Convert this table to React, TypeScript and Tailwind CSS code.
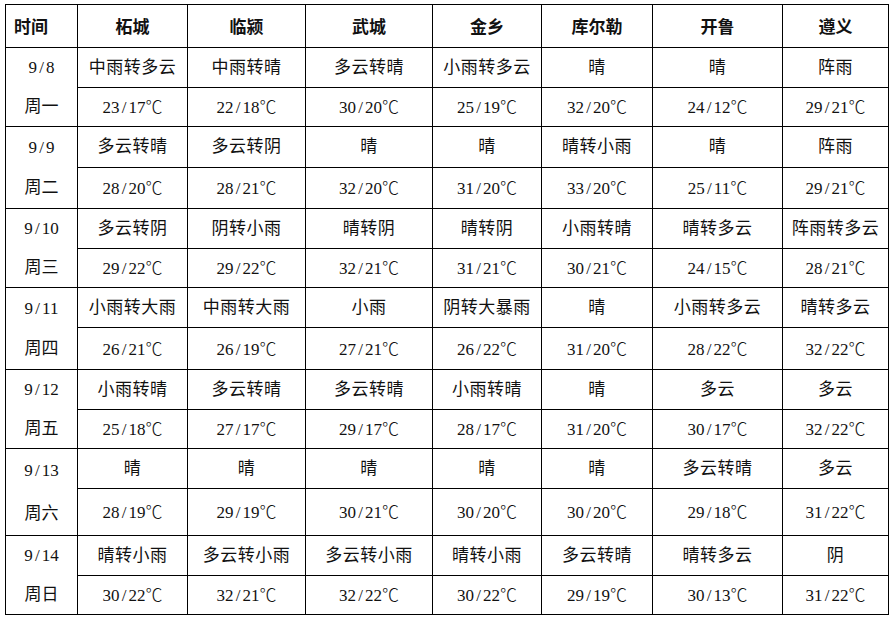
const cities = ["柘城", "临颍", "武城", "金乡", "库尔勒", "开鲁", "遵义"];

const colWidths = [72, 110, 118, 127, 109, 111, 130, 106];

type Day = {
  date: string;
  week: string;
  weather: string[];
  temps: string[];
  h1: number;
  h2: number;
};

const days: Day[] = [
  {
    date: "9/8",
    week: "周一",
    weather: ["中雨转多云", "中雨转晴", "多云转晴", "小雨转多云", "晴", "晴", "阵雨"],
    temps: ["23/17", "22/18", "30/20", "25/19", "32/20", "24/12", "29/21"],
    h1: 40,
    h2: 39,
  },
  {
    date: "9/9",
    week: "周二",
    weather: ["多云转晴", "多云转阴", "晴", "晴", "晴转小雨", "晴", "阵雨"],
    temps: ["28/20", "28/21", "32/20", "31/20", "33/20", "25/11", "29/21"],
    h1: 41,
    h2: 41,
  },
  {
    date: "9/10",
    week: "周三",
    weather: ["多云转阴", "阴转小雨", "晴转阴", "晴转阴", "小雨转晴", "晴转多云", "阵雨转多云"],
    temps: ["29/22", "29/22", "32/21", "31/21", "30/21", "24/15", "28/21"],
    h1: 40,
    h2: 39,
  },
  {
    date: "9/11",
    week: "周四",
    weather: ["小雨转大雨", "中雨转大雨", "小雨", "阴转大暴雨", "晴", "小雨转多云", "晴转多云"],
    temps: ["26/21", "26/19", "27/21", "26/22", "31/20", "28/22", "32/22"],
    h1: 40,
    h2: 42,
  },
  {
    date: "9/12",
    week: "周五",
    weather: ["小雨转晴", "多云转晴", "多云转晴", "小雨转晴", "晴", "多云", "多云"],
    temps: ["25/18", "27/17", "29/17", "28/17", "31/20", "30/17", "32/22"],
    h1: 40,
    h2: 39,
  },
  {
    date: "9/13",
    week: "周六",
    weather: ["晴", "晴", "晴", "晴", "晴", "多云转晴", "多云"],
    temps: ["28/19", "29/19", "30/21", "30/20", "30/20", "29/18", "31/22"],
    h1: 40,
    h2: 47,
  },
  {
    date: "9/14",
    week: "周日",
    weather: ["晴转小雨", "多云转小雨", "多云转小雨", "晴转小雨", "多云转晴", "晴转多云", "阴"],
    temps: ["30/22", "32/21", "32/22", "30/22", "29/19", "30/13", "31/22"],
    h1: 40,
    h2: 39,
  },
];

function Slashed({ value, unit }: { value: string; unit?: string }) {
  const [a, b] = value.split("/");
  return (
    <span>
      {a}
      <span className="inline-block w-[9px] text-center">/</span>
      {b}
      {unit && <span className="font-['Noto_Sans_CJK_SC',sans-serif] font-light">{unit}</span>}
    </span>
  );
}

export default function App() {
  return (
    <div className="w-[896px] h-[620px] bg-white pl-[5px] pt-[4px] text-[#111] font-['Liberation_Serif','Noto_Sans_CJK_SC',serif] text-[17px]">
      <table className="border-collapse table-fixed w-[884px]">
        <colgroup>
          {colWidths.map((w, i) => (
            <col key={i} style={{ width: w }} />
          ))}
        </colgroup>
        <thead>
          <tr className="h-[43px]">
            <th className="border border-black font-bold text-left pl-[8px] font-['Noto_Sans_CJK_SC',sans-serif] text-[17px]">
              时间
            </th>
            {cities.map((c) => (
              <th
                key={c}
                className="border border-black font-bold text-center font-['Noto_Sans_CJK_SC',sans-serif] text-[17px]"
              >
                {c}
              </th>
            ))}
          </tr>
        </thead>
        <tbody>
          {days.map((d) => (
            <>
              <tr key={d.date + "a"} style={{ height: d.h1 }}>
                <td rowSpan={2} className="border border-black p-0 align-top">
                  <div className="flex flex-col" style={{ height: d.h1 + d.h2 - 1 }}>
                    <div className="flex-1 flex items-center justify-center">
                      <Slashed value={d.date} />
                    </div>
                    <div className="flex-1 flex items-center justify-center">{d.week}</div>
                  </div>
                </td>
                {d.weather.map((w, i) => (
                  <td key={i} className="border border-black text-center p-0 tracking-[0.5px]">
                    {w}
                  </td>
                ))}
              </tr>
              <tr key={d.date + "b"} style={{ height: d.h2 }}>
                {d.temps.map((t, i) => (
                  <td key={i} className="border border-black text-center p-0">
                    <Slashed value={t} unit="℃" />
                  </td>
                ))}
              </tr>
            </>
          ))}
        </tbody>
      </table>
    </div>
  );
}
